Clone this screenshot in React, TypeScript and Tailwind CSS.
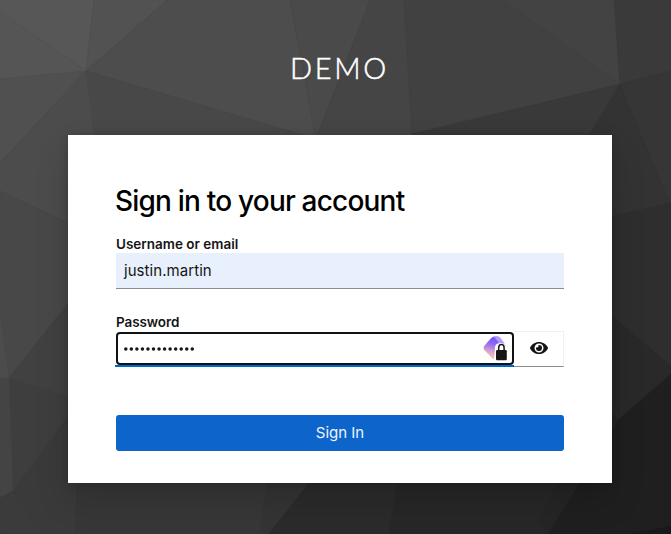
import { FaEye } from "react-icons/fa";

const facets: [string, string][] = [
  ["0,0 94,0 86,71 0,12", "#575757"],
  ["0,12 86,71 0,79", "#555555"],
  ["94,0 167.5,0 86,71", "#525252"],
  ["167.5,0 290,0 316,139 86,71", "#4d4d4d"],
  ["290,0 370,0 316,139", "#4a4a4a"],
  ["370,0 404,0 412,134 412,150 316,150 316,139", "#454545"],
  ["404,0 503,0 620,84 412,134", "#414141"],
  ["503,0 614,0 620,84", "#434343"],
  ["614,0 671,0 671,71 620,84", "#3a3a3a"],
  ["412,134 620,84 580,150 412,150", "#393939"],
  ["620,84 671,206 671,203 600,219 580,150", "#333333"],
  ["620,84 671,71 671,206", "#363636"],
  ["0,79 86,71 0,163", "#505050"],
  ["0,163 86,71 99,160 99,238 0,191", "#4c4c4c"],
  ["86,71 316,139 316,160 97,160", "#484848"],
  ["0,191 99,238 99,264 9,378 0,310", "#484848"],
  ["0,310 9,378 0,378", "#4c4c4c"],
  ["9,378 99,264 99,407", "#414141"],
  ["9,378 99,407 99,375 13,491", "#3e3e3e"],
  ["0,378 9,378 13,491 0,498", "#444444"],
  ["13,491 99,375 99,483 77,483 76,534 43,534", "#3a3a3a"],
  ["0,498 13,491 43,534 0,534", "#3b3b3b"],
  ["77,470 269,470 260,534 76,534", "#373737"],
  ["269,470 319,470 269,534 260,534", "#343434"],
  ["319,470 400,470 389,534 269,534", "#2b2b2b"],
  ["400,470 587,470 548,534 389,534", "#272727"],
  ["600,219 671,203 671,366 600,306", "#2e2e2e"],
  ["600,306 671,366 671,374 618,420 600,396", "#292929"],
  ["618,420 671,374 671,526 632,534 548,534", "#1f1f1f"],
  ["618,420 548,534 540,520 600,396", "#252525"],
  ["671,526 671,534 632,534", "#191919"],
];

function Backdrop() {
  return (
    <svg className="absolute inset-0 size-full" viewBox="0 0 671 534" aria-hidden="true">
      <rect width="671" height="534" fill="#3a3a3a" />
      {facets.map(([points, color]) => (
        <polygon key={points} points={points} fill={color} stroke={color} strokeWidth="0.4" />
      ))}
    </svg>
  );
}

function MaskDots() {
  return (
    <svg className="h-1 w-[72px]" viewBox="0 0 72 4" aria-hidden="true">
      {Array.from({ length: 13 }, (_, i) => (
        <circle key={i} cx={1.8 + i * 5.54} cy="2" r="1.75" fill="#151515" />
      ))}
    </svg>
  );
}

function VaultIcon() {
  return (
    <svg className="mb-px h-[26px] w-[26px]" viewBox="0 0 26 26" aria-hidden="true">
      <defs>
        <linearGradient id="gem" x1="0.6" y1="0" x2="0.4" y2="1">
          <stop offset="0.1" stopColor="#7a55fb" />
          <stop offset="0.35" stopColor="#8d69f5" />
          <stop offset="0.68" stopColor="#d7a5cf" />
          <stop offset="1" stopColor="#ffc9a0" />
        </linearGradient>
      </defs>
      <path d="M8.200 3Q9.500 1.500 11.500 1.500H15L23 11L13 24.500H10.500L1.200 15Q.2 13.500 .8 11.500Z" fill="url(#gem)" />
      <path d="M11 1.500H15.200Q16.800 1.600 17.700 3L21.500 8.500L18.500 11Z" fill="#b49cfc" />
      <path d="M12 12Q12.400 8 18 8Q23 8.400 23.500 13L26 14V26H10.500L11.500 20Z" fill="#fff" />
      <path d="M15.700 15.500V12.700a2.700 3.100 0 0 1 5.400 0V15.500" fill="none" stroke="#151515" strokeWidth="1.500" />
      <rect x="13" y="15" width="10.800" height="10.300" rx="1.200" fill="#151515" />
    </svg>
  );
}

export default function App() {
  return (
    <main className="relative h-[534px] w-[671px] overflow-hidden font-['Inter',sans-serif]">
      <Backdrop />
      <div className="relative flex flex-col pl-[68px]">
        <header className="flex h-[135px] w-[543px] items-center justify-center font-['Lato',sans-serif] text-[29px] font-light tracking-[2.700px] text-white [-webkit-text-stroke:0.5px_white]">
          DEMO
        </header>
        <section className="flex h-[348px] w-[544px] flex-col bg-white px-12 pt-12 text-[#151515] shadow-[0_16px_32px_rgba(3,3,3,0.16),0_0_8px_rgba(3,3,3,0.16)]">
          <h1 className="-ml-px h-[52px] text-[28px] leading-[36px] font-medium tracking-[-0.800px] whitespace-nowrap text-black">
            Sign in to your account
          </h1>
          <form className="flex flex-col" onSubmit={(e) => e.preventDefault()}>
            <label className="h-[18px] text-[13.500px] leading-[18px] font-semibold">
              <span>Username or email</span>
            </label>
            <div className="flex h-9 items-center border-b border-[#8a8d90] bg-[#e8f0fe] px-2 pt-0.5 text-[15px] tracking-[0.060px]">
              justin.martin
            </div>
            <label className="mt-6 h-[18px] text-[13.500px] leading-[18px] font-semibold tracking-[-0.100px]">
              <span>Password</span>
            </label>
            <div className="flex h-9">
              <div className="-ml-px flex h-9 w-[399px] flex-col border-b-2 border-[#0066cc] pt-px pl-px">
                <div className="flex h-[33px] w-[398px] shrink-0 items-center justify-between rounded-[4px] border-2 border-[#101114] bg-white pr-[3px] pl-1.5">
                  <MaskDots />
                  <VaultIcon />
                </div>
              </div>
              <button type="button" className="flex h-9 w-[50px] items-center justify-center border-t border-r border-b border-[#f0f0f0] border-b-[#8a8d90] pb-0.5">
                <FaEye size={18} />
              </button>
            </div>
            <button type="submit" className="mt-12 h-9 rounded-[3px] bg-[#0d65cc] text-[15px] text-[#f0f5fc]">
              Sign In
            </button>
          </form>
        </section>
      </div>
    </main>
  );
}
